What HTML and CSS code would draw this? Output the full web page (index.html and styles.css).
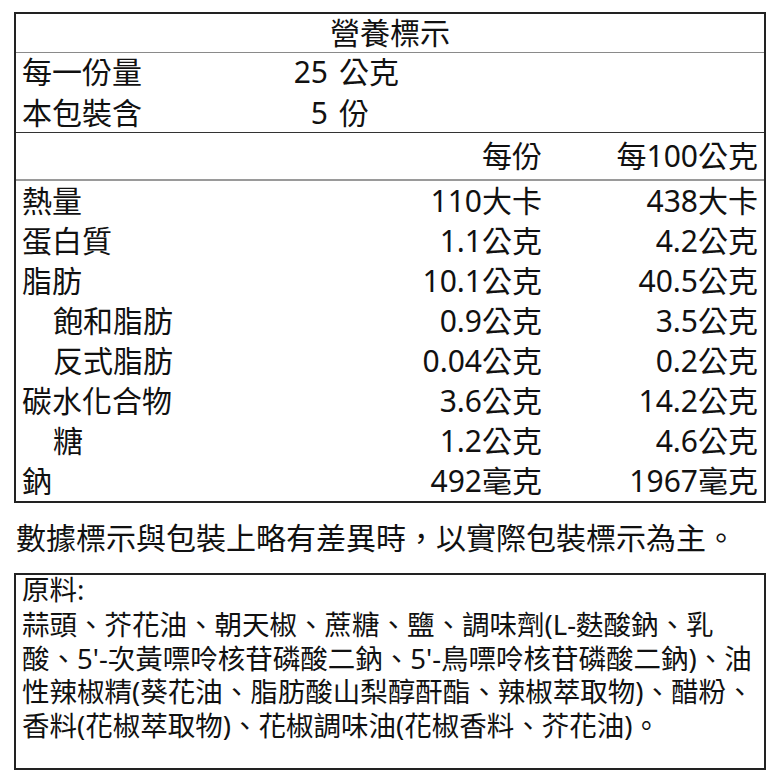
FILE: index.html
```html
<!DOCTYPE html>
<html lang="zh-Hant-TW">
<head>
<meta charset="utf-8">
<title>營養標示</title>
<link rel="stylesheet" href="styles.css">
</head>
<body>
<div class="page">
  <div class="label">
    <div class="title">營養標示</div>
    <div class="serving">
      <div class="srow"><span class="sname">每一份量</span><span class="snum">25</span><span class="sunit">公克</span></div>
      <div class="srow second"><span class="sname">本包裝含</span><span class="snum">5</span><span class="sunit">份</span></div>
    </div>
    <div class="head">
      <span></span><span class="v">每份</span><span class="v">每100公克</span>
    </div>
    <div class="rows">
      <div class="row"><span>熱量</span><span class="v">110大卡</span><span class="v">438大卡</span></div>
      <div class="row"><span>蛋白質</span><span class="v">1.1公克</span><span class="v">4.2公克</span></div>
      <div class="row"><span>脂肪</span><span class="v">10.1公克</span><span class="v">40.5公克</span></div>
      <div class="row"><span class="sub">飽和脂肪</span><span class="v">0.9公克</span><span class="v">3.5公克</span></div>
      <div class="row"><span class="sub">反式脂肪</span><span class="v">0.04公克</span><span class="v">0.2公克</span></div>
      <div class="row"><span>碳水化合物</span><span class="v">3.6公克</span><span class="v">14.2公克</span></div>
      <div class="row"><span class="sub">糖</span><span class="v">1.2公克</span><span class="v">4.6公克</span></div>
      <div class="row"><span>鈉</span><span class="v">492毫克</span><span class="v">1967毫克</span></div>
    </div>
  </div>
  <p class="note">數據標示與包裝上略有差異時，以實際包裝標示為主。</p>
  <div class="ingredients">
    <div class="ing-title">原料:</div>
    <div class="ing-text">蒜頭、芥花油、朝天椒、蔗糖、鹽、調味劑(L-麩酸鈉、乳<br>酸、5'-次黃嘌呤核苷磷酸二鈉、5'-鳥嘌呤核苷磷酸二鈉)、油<br>性辣椒精(葵花油、脂肪酸山梨醇酐酯、辣椒萃取物)、醋粉、<br>香料(花椒萃取物)、花椒調味油(花椒香料、芥花油)。</div>
  </div>
</div>
</body>
</html>
```

FILE: styles.css
```css
html, body {
  margin: 0;
  padding: 0;
  background: #ffffff;
}

body {
  font-family: "Noto Sans", "Noto Sans CJK TC", sans-serif;
  color: #111111;
}

.page {
  width: 752px;
  padding: 12px 0 0 14px;
}

.label {
  border: 2px solid #222222;
  font-size: 30px;
}

.title {
  height: 38px;
  line-height: 38px;
  text-align: center;
  border-bottom: 1px solid #8a8a8a;
}

.serving {
  height: 79px;
  border-bottom: 1px solid #333333;
}

.srow {
  display: grid;
  grid-template-columns: 240px 66px auto;
  padding-left: 6px;
  height: 40px;
  line-height: 38px;
}

.srow.second {
  height: 39px;
  line-height: 40px;
}

.snum {
  text-align: right;
}

.sunit {
  padding-left: 11px;
}

.head, .row {
  display: grid;
  grid-template-columns: 1fr 200px 216px;
  padding: 0 6px;
}

.head {
  height: 46px;
  line-height: 46px;
  border-bottom: 2px solid #9a9a9a;
}

.row {
  height: 40px;
  line-height: 40px;
}

.v {
  text-align: right;
  white-space: nowrap;
}

.sub {
  padding-left: 31px;
}

.note {
  margin: 15px 0 0 0;
  padding-left: 2px;
  font-size: 30px;
  line-height: 40px;
  white-space: nowrap;
}

.ingredients {
  margin-top: 15px;
  height: 193px;
  border: 2px solid #222222;
  padding-left: 6px;
  font-size: 27.5px;
  white-space: nowrap;
}

.ing-title {
  line-height: 30px;
}

.ing-text {
  margin-top: 3px;
  line-height: 33.5px;
}
```
